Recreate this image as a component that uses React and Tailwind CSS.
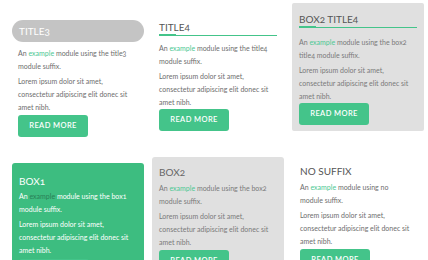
import React from 'react';

const Text = ({ intro, linkClass, className = '' }) => (
  <div className={className}>
    <p className="leading-[13px]">
      An <span className={linkClass}>example</span> module using {intro}
    </p>
    <p className="mt-[2px] leading-[13px]">
      Lorem ipsum dolor sit amet,
      <br />
      consectetur adipiscing elit donec sit
      <br />
      amet nibh.
    </p>
  </div>
);

const Button = ({ className = '' }) => (
  <button
    className={`flex h-[22px] w-[70px] items-center justify-center rounded-[3px] bg-[#44c48a] text-[7.5px] font-semibold tracking-[0.4px] text-white ${className}`}
  >
    READ MORE
  </button>
);

const Underline = () => (
  <div className="flex items-end">
    <div className="h-[2px] w-[17px] bg-[#44c48a]" />
    <div className="h-px flex-1 bg-[#44c48a]" />
  </div>
);

const App = () => {
  return (
    <div
      className="flex h-[260px] w-[428px] items-start gap-2 overflow-hidden bg-white pl-3 pr-1 text-[7px] text-[#6e6e6e] oldstyle-nums"
      style={{ fontFamily: 'Lato, "Noto Sans", sans-serif' }}
    >
      {/* column 1 */}
      <div className="w-[132px] shrink-0">
        <div className="mt-[20px] flex h-[22px] items-center rounded-full bg-[#c4c4c4] px-[7px] text-[10px] text-white">
          TITLE3
        </div>
        <div className="px-[6px]">
          <Text
            intro={<>the title3<br />module suffix.</>}
            linkClass="text-[#4cc893]"
            className="mt-[5px]"
          />
          <Button className="mt-[1px]" />
        </div>
        <div className="mt-[26px] rounded-t-[3px] bg-[#3dbd80] px-[7px] pt-[11px] pb-3 text-white">
          <div className="text-[10px] leading-[14px]">BOX1</div>
          <Text
            intro={<>the box1<br />module suffix.</>}
            linkClass="text-[#2a7f57]"
            className="mt-[2px]"
          />
          <Button className="mt-[2px] bg-[#5fd09c]" />
        </div>
      </div>

      {/* column 2 */}
      <div className="w-[132px] shrink-0">
        <div className="px-[7px]">
          <div className="mt-[20px] text-[10px] leading-[14px] text-[#555]">TITLE4</div>
          <Underline />
          <Text
            intro={<>the title4<br />module suffix.</>}
            linkClass="text-[#4cc893]"
            className="mt-[6px]"
          />
          <Button />
        </div>
        <div className="mt-[26px] rounded-t-[3px] bg-[#e0e0e0] px-[7px] pt-[8px] pb-3 text-[#7a7a7a]">
          <div className="text-[10px] leading-[14px] text-[#666]">BOX2</div>
          <Text
            intro={<>the box2<br />module suffix.</>}
            linkClass="text-[#4cc893]"
            className="mt-[3px]"
          />
          <Button className="mt-[1px]" />
        </div>
      </div>

      {/* column 3 */}
      <div className="w-[132px] shrink-0">
        <div className="mt-[3px] rounded-[2px] bg-[#e0e0e0] px-[7px] pt-[9px] pb-[6px] text-[#7a7a7a]">
          <div className="text-[10px] leading-[14px] text-[#555]">BOX2 TITLE4</div>
          <Underline />
          <Text
            intro={<>the box2<br />title4 module suffix.</>}
            linkClass="text-[#4cc893]"
            className="mt-[8px]"
          />
          <Button />
        </div>
        <div className="mt-[33px] px-[8px]">
          <div className="text-[10px] leading-[14px] text-[#555]">NO SUFFIX</div>
          <Text
            intro={<>no<br />module suffix.</>}
            linkClass="text-[#4cc893]"
            className="mt-[3px]"
          />
          <Button className="mt-[1px]" />
        </div>
      </div>
    </div>
  );
};

export default App;
